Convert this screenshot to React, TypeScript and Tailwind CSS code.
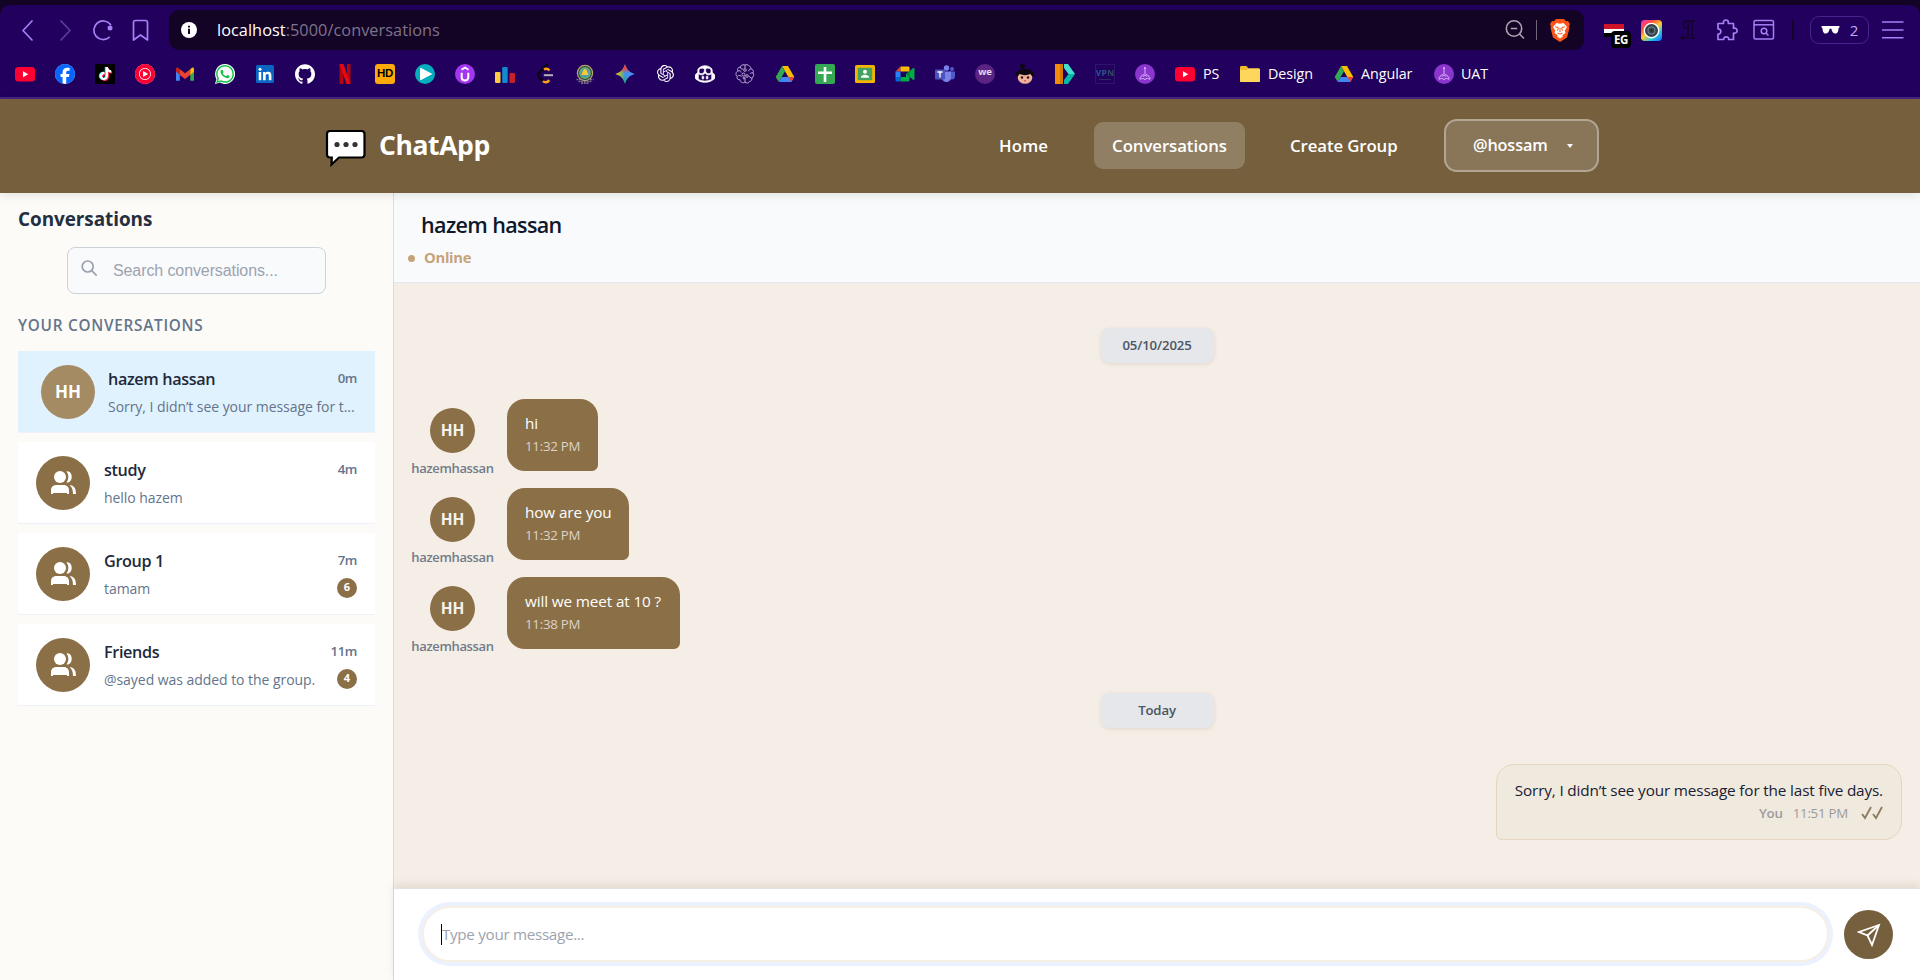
import React from "react";
import { SiFacebook, SiTiktok, SiYoutubemusic, SiWhatsapp, SiGithub, SiOpenai, SiGithubcopilot } from "react-icons/si";

const purple = "#a87ff5";

function Fav({ children }: { children: React.ReactNode }) {
  return <div className="flex h-5 w-5 shrink-0 items-center justify-center">{children}</div>;
}

function S({ children }: { children?: React.ReactNode }) {
  return (
    <svg viewBox="0 0 20 20" className="h-5 w-5" fill="none">
      {children}
    </svg>
  );
}

const Youtube = () => (
  <S>
    <rect x="0" y="3" width="20" height="14.5" rx="3.5" fill="#ff0033" />
    <path d="M8 7.2v6l5.2-3z" fill="#fff" />
  </S>
);
const Drive = () => (
  <S>
    <path d="M7 2h6l6.300 11H13.300z" fill="#fbbc04" />
    <path d="M7 2l3 5.300-6.200 10.700L.7 13z" fill="#34a853" />
    <path d="M6.700 13h12.600l-3 5H3.800z" fill="#4285f4" />
    <path d="M13.300 13h6l-3 5z" fill="#ea4335" />
  </S>
);
const Uat = () => (
  <S>
    <circle cx="10" cy="10" r="10" fill="#8b35cf" />
    <path d="M10 4v6.500M9 10.500c-2.500.8-3.800 2.300-4.200 4.500M11 10.500c2.500.8 3.800 2.300 4.200 4.500M5 15.500c1.500-1.300 3.500-1.300 5 0 1.500-1.300 3.500-1.300 5 0M8 12.800l2-2 2 2" stroke="#d9b8f5" strokeWidth="1" />
    <circle cx="10" cy="4" r="1" fill="#d9b8f5" />
  </S>
);

function Bookmarks() {
  return (
    <div className="flex h-[47px] items-center gap-5 pl-[15px] text-[14.300px] tracking-[-0.050px] text-white">
      <Fav><Youtube /></Fav>
      <Fav><div className="h-5 w-5 rounded-full bg-white"><SiFacebook size={20} color="#0866ff" /></div></Fav>
      <Fav>
        <div className="relative flex h-5 w-5 items-center justify-center bg-black">
          <SiTiktok size={13} color="#25f4ee" className="absolute left-[3px] top-[3px]" />
          <SiTiktok size={13} color="#fe2c55" className="absolute left-[4.500px] top-[4.500px]" />
          <SiTiktok size={13} color="#fff" className="absolute left-[3.700px] top-[3.700px]" />
        </div>
      </Fav>
      <Fav><div className="h-5 w-5 rounded-full bg-white"><SiYoutubemusic size={20} color="#ff0033" /></div></Fav>
      <Fav>
        <S>
          <path d="M1 4.500v12.200h3.800V8z" fill="#4285f4" />
          <path d="M19 4.500v12.200h-3.800V8z" fill="#34a853" />
          <path d="M15.200 5.200 17 3.700c1-.7 2 0 2 1.300v2.800L15.200 11z" fill="#fbbc04" />
          <path d="M4.800 5.200 3 3.700C2 3 1 3.700 1 5v2.800L4.800 11z" fill="#c5221f" />
          <path d="M4.800 5.200 10 9.200l5.200-4V11L10 15 4.800 11z" fill="#ea4335" />
        </S>
      </Fav>
      <Fav>
        <div className="relative h-5 w-5">
          <S><path d="M10 0a10 10 0 1 1-5 18.600L0 20l1.400-5A10 10 0 0 1 10 0z" fill="#fff" /></S>
          <SiWhatsapp size={18} color="#13c24b" className="absolute left-px top-px" />
        </div>
      </Fav>
      <Fav>
        <S>
          <rect x="1" y="1" width="18" height="18" rx="1.500" fill="#0a66c2" />
          <path d="M3.700 8h2.600v8.200H3.700zM8 8h2.500v1.200c.5-.9 1.400-1.400 2.700-1.400 2.400 0 3.200 1.500 3.200 3.900v4.500h-2.600v-4c0-1.300-.3-2.100-1.400-2.100-1.200 0-1.700.8-1.700 2.100v4H8z" fill="#fff" />
          <circle cx="5" cy="5.200" r="1.500" fill="#fff" />
        </S>
      </Fav>
      <Fav><SiGithub size={20} color="#fff" /></Fav>
      <Fav>
        <S>
          <path d="M4.500 0H8v20l-3.500.3zM12 0h3.500v20H12z" fill="#b1060f" />
          <path d="M4.500 0H8.500L15.500 20h-4z" fill="#e50914" />
        </S>
      </Fav>
      <Fav><div className="flex h-5 w-5 items-center justify-center rounded-[3px] bg-[#ffa90a] font-['Liberation_Sans',sans-serif] text-[11.500px] font-bold tracking-[-0.300px] text-black">HD</div></Fav>
      <Fav><S><circle cx="10" cy="10" r="10" fill="#05aebd" /><path d="M5.500 4.200v11.600L16.500 10z" fill="#fff" stroke="#fff" strokeLinejoin="round" /></S></Fav>
      <Fav>
        <S>
          <circle cx="10" cy="10" r="10" fill="#a435f0" />
          <path d="M6.700 8.800v4.400c0 4.400 6.600 4.400 6.600 0V8.800" stroke="#fff" strokeWidth="2" />
          <path d="M6.500 5.800 10 3.600l3.500 2.200" stroke="#fff" strokeWidth="1.800" />
        </S>
      </Fav>
      <Fav>
        <S>
          <rect x="0" y="8" width="5.500" height="11" rx="1" fill="#ffcb45" />
          <rect x="7.200" y="3" width="5.500" height="16" rx="1" fill="#1389d0" />
          <rect x="14.500" y="9" width="5.500" height="10" rx="1" fill="#c4212d" />
        </S>
      </Fav>
      <Fav>
        <S>
          <path d="M12.500.3 4.300 8.600c-1.400 1.500-1.400 3.200 0 4.700l4 4" stroke="#0b0714" strokeWidth="2.600" />
          <path d="M9 5.600c2-1.400 3.700-1 5.500.9M8 17c1.700 1.900 4 1.900 6.300-.9" stroke="#ffa116" strokeWidth="2.500" />
          <path d="M8.800 11.200H18" stroke="#b3b3b3" strokeWidth="2" />
        </S>
      </Fav>
      <Fav>
        <S>
          <path d="M5 3.500C6 0 14 0 15 3.500L17 6H3z" fill="#9a7272" />
          <path d="M1.500 15.500h17M3.500 17.500h13M6 19.300h8" stroke="#77738b" strokeWidth="1.500" strokeDasharray="2 .7" />
          <circle cx="10" cy="9" r="7.600" fill="#253f4e" stroke="#b6a36c" strokeWidth="1.300" />
          <circle cx="10" cy="9" r="5.200" fill="#4a9bb0" stroke="#6fae62" strokeWidth="1.400" />
          <path d="M10 4.800c2.300 1.200 2.300 3.400 3.500 6.200h-7c1.200-2.800 1.200-5 3.500-6.200z" fill="#ffc936" />
        </S>
      </Fav>
      <Fav>
        <svg viewBox="0 0 20 20" className="h-5 w-5">
          <defs>
            <linearGradient id="gem" x1="0" y1="0" x2="1" y2="0">
              <stop offset="0" stopColor="#f5c52a" /><stop offset=".3" stopColor="#8bb84a" /><stop offset=".5" stopColor="#3d8ff0" /><stop offset="1" stopColor="#4a92ff" />
            </linearGradient>
            <linearGradient id="gem2" x1="0" y1="0" x2="0" y2="1">
              <stop offset="0" stopColor="#f2453b" /><stop offset=".2" stopColor="#f2453b" /><stop offset=".45" stopColor="#f2453b" stopOpacity="0" /><stop offset=".6" stopColor="#1bb15c" stopOpacity="0" /><stop offset="1" stopColor="#1bb15c" />
            </linearGradient>
          </defs>
          <path d="M10 .3C11.500 5.500 14.500 8.500 19.700 10 14.500 11.500 11.500 14.500 10 19.700 8.500 14.500 5.500 11.500.3 10 5.500 8.500 8.500 5.500 10 .3z" fill="url(#gem)" />
          <path d="M10 .3C11.500 5.500 14.500 8.500 19.700 10 14.500 11.500 11.500 14.500 10 19.700 8.500 14.500 5.500 11.500.3 10 5.500 8.500 8.500 5.500 10 .3z" fill="url(#gem2)" />
        </svg>
      </Fav>
      <Fav><SiOpenai size={17} color="#fff" /></Fav>
      <Fav><SiGithubcopilot size={20} color="#fff" stroke="#fff" strokeWidth={0.8} /></Fav>
      <Fav>
        <S>
          <g stroke="#b9a8cf" strokeWidth="1" strokeLinejoin="round">
            <path d="M10 1C7 0 5.500 2 5.500 3 3 3 2 5 3 7 .5 8 .5 11 2 12.300 1.500 15 3.500 16 5 15.700c0 2.500 3 4 5 2.300 1 1.500 4 1.500 4.500-.7 2 0 2.800-1.800 2.300-3.300 2-1 2.500-3.500 1.200-5 1-2-.3-4-2-4.300C15.500 2 12.500 0 10 1z" />
            <path d="M3 7c1.500-.8 3 0 3 1.500M2.500 12c1.500-1 3.500-.7 4 .8M5.500 3c0 1.700 1 2.500 2.700 2M10 1v3.500M16 5c-1.500 0-2.300.8-2.300 2.300M18 9c-1.500-.5-2.500 0-3 1M16.800 14c-1.300 0-2.500-.6-2.500-2M10 18v-3.500" />
            <circle cx="10" cy="6" r="1.300" /><circle cx="8.500" cy="10.500" r="1.500" /><circle cx="12" cy="12" r="1.300" /><circle cx="9" cy="14" r="1" />
          </g>
        </S>
      </Fav>
      <Fav><Drive /></Fav>
      <Fav><S><rect width="20" height="20" rx="2" fill="#34a853" /><path d="M8.700 3h2.600v4.600H17v2.400h-5.700V18H8.700v-8H3V7.600h5.700z" fill="#fff" /></S></Fav>
      <Fav>
        <S>
          <rect y="1" width="20" height="18" rx="1.500" fill="#f4b400" />
          <rect x="2.800" y="3.800" width="14.400" height="12.400" fill="#42a35f" />
          <circle cx="10" cy="7.700" r="2" fill="#fff" /><path d="M5.800 13.800c0-4 8.400-4 8.400 0z" fill="#fff" />
        </S>
      </Fav>
      <Fav>
        <S>
          <path d="M.5 7.500 5.500 2.500v5z" fill="#ea4335" />
          <path d="M5.500 2.500H13c1 0 1.500.5 1.500 1.500v3.500h-9z" fill="#fbbc04" />
          <path d="M.5 7.500h5v5.500h-5z" fill="#2684fc" />
          <path d="M.5 13h5v4.500H2C1 17.500.5 17 .5 16z" fill="#0066da" />
          <path d="M5.500 13H11v-3l3.500-3v9c0 1-.5 1.500-1.500 1.500H5.500z" fill="#00ac47" />
          <path d="M14.500 7.500 11 10l3.500 2.500z" fill="#00832d" />
          <path d="m14.500 7.200 3.500-2.900c.7-.5 1.500 0 1.500.7v10c0 .8-.8 1.200-1.500.7l-3.500-2.900z" fill="#00ac47" />
        </S>
      </Fav>
      <Fav>
        <S>
          <circle cx="11.500" cy="4" r="2.700" fill="#7b83eb" /><circle cx="17" cy="5" r="2" fill="#5059c9" />
          <path d="M14.500 7.500H20v5c0 2.500-3 4-4.500 2.500z" fill="#5059c9" />
          <path d="M7 7.500h9v6c0 5-7.500 6.500-9 1z" fill="#7b83eb" />
          <rect x="0" y="5.500" width="10" height="10" rx="1" fill="#4b53bc" />
          <path d="M2.500 8h5M5 8v5.500" stroke="#fff" strokeWidth="1.300" />
        </S>
      </Fav>
      <Fav><div className="flex h-5 w-5 items-center justify-center rounded-full bg-[#5c2482] pb-0.5 text-[9.500px] font-bold tracking-[-0.200px] text-[#e5d8ee]">we</div></Fav>
      <Fav>
        <S>
          <circle cx="7.500" cy="2.500" r="2.400" fill="#0d0710" />
          <ellipse cx="10" cy="13.500" rx="7.300" ry="6.300" fill="#eeb299" />
          <path d="M.3 12C.5 2.500 19.500 2.500 19.700 12c-1.500.7-3 .5-4.200-2-3.500 1.500-7.500 1.500-11 0-1.200 2.500-2.700 2.700-4.200 2z" fill="#0d0710" />
          <circle cx="7" cy="13.500" r="1.200" fill="#291019" /><circle cx="13" cy="13.500" r="1.200" fill="#291019" />
          <path d="M9 16.800h2" stroke="#c44" />
        </S>
      </Fav>
      <Fav>
        <S>
          <path d="M0 0h8v20H0z" fill="#f48c0b" /><path d="M5 0h3v20H5z" fill="#d97706" />
          <path d="M9 0h4l7 10h-6.500L9 4z" fill="#42dfd0" /><path d="M13.500 10H20l-7 10H9v-4z" fill="#08b7a8" />
        </S>
      </Fav>
      <Fav>
        <div className="flex h-5 w-5 flex-col items-center border border-[#32136b] pt-[3px] text-[8.500px] leading-[9px] font-bold tracking-[0.300px]">
          <span className="text-[#27568c]">VP<span className="text-[#2c4d5c]">N</span></span>
          <span className="mt-[2px] h-px w-3 bg-[#2c2c5c]" />
        </div>
      </Fav>
      <Fav><Uat /></Fav>
      <div className="flex w-[45px] items-center gap-2"><Fav><Youtube /></Fav><span>PS</span></div>
      <div className="flex w-[74px] items-center gap-2">
        <Fav><S><path d="M0 3.500C0 2.500.5 2 1.500 2h5l2 2.500h10c1 0 1.500.5 1.500 1.500v10.500c0 1-.5 1.500-1.500 1.500h-17C.5 18 0 17.500 0 16.500z" fill="#f0b92e" /><path d="M0 6h7l1.500-1.500H18.500c1 0 1.500.5 1.500 1.500v10.500c0 1-.5 1.500-1.500 1.500h-17C.5 18 0 17.500 0 16.500z" fill="#ffd65c" /></S></Fav>
        <span>Design</span>
      </div>
      <div className="flex w-20 items-center gap-[7px]"><Fav><Drive /></Fav><span>Angular</span></div>
      <div className="flex items-center gap-[7px]"><Fav><Uat /></Fav><span>UAT</span></div>
    </div>
  );
}

function Toolbar() {
  return (
    <div className="flex h-[45px] items-center pt-[5px]">
      <svg width="169" height="40" viewBox="0 0 169 40" fill="none" stroke={purple} strokeWidth="1.700" strokeLinecap="round" strokeLinejoin="round">
        <path d="m32 11-9 9.500 9 9.500" />
        <path d="m61 11 9 9.500-9 9.500" stroke="#603a9f" />
        <path d="M110.500 14.500a9.300 9.300 0 1 0-1.300 12.800" /><circle cx="110" cy="18" r="2.500" fill={purple} stroke="none" />
        <path d="M133.500 12.500c0-1.500.5-2 2-2h10c1.500 0 2 .5 2 2v17.500l-7-5-7 5z" />
      </svg>
      <div className="flex h-10 w-[1415px] items-center rounded-[10px] bg-[#130325] pl-3 pr-[13px]">
        <svg width="16" height="16" viewBox="0 0 16 16"><circle cx="8" cy="8" r="8" fill="#fff" /><path d="M7 6.800h2V12H7zM7 3.800h2v1.800H7z" fill="#130325" /></svg>
        <span className="ml-5 flex-1 text-[16.300px] tracking-[0.050px] text-[#7d748b]"><span className="text-white">localhost</span>:5000/conversations</span>
        <svg width="22" height="22" viewBox="0 0 22 22" fill="none" stroke="#aaa4b3" strokeWidth="1.600"><circle cx="10" cy="9.500" r="7.700" /><path d="m15.500 15 4.500 4.500M6.800 9.500h6.400" /></svg>
        <span className="ml-[10px] h-5 w-px bg-[#6d6675]" />
        <svg width="20" height="23" viewBox="0 0 20 23" className="ml-[13px] mr-px">
          <path d="M6 0h8l2 2.200 2-.2 2 3-1 2.500.5 1.500-2.500 9.500L10 23l-7-4.500L.5 9 1 7.500 0 5l2-3 2 .2z" fill="#fb5419" />
          <path d="M10 4.800 13.500 4 17 8l-2.200 3.500.7 2.500-3 2 .3 1.500L10 19.500l-2.800-2 .3-1.500-3-2 .7-2.500L3 8l3.500-4z" fill="#fff" />
          <path d="m5 7.800 3.500.8-1 3M15 7.800l-3.500.8 1 3M10 9v4M7.500 14l2.500 1 2.500-1" stroke="#fb5419" strokeWidth="1" fill="none" />
        </svg>
      </div>
      <div className="relative ml-5 h-10 w-[26px]">
        <div className="mt-[14px] h-[5px] w-5 bg-[#d01427]" /><div className="h-[4px] w-5 bg-white" /><div className="h-[4px] w-5 bg-black" />
        <span className="absolute left-[7px] top-[21px] flex h-[17px] w-[20px] items-center justify-center rounded-[4px] bg-black text-[11.500px] font-bold tracking-[-0.300px] text-white">EG</span>
      </div>
      <svg width="21" height="21" viewBox="0 0 20 20" className="ml-[11px]">
        <defs><linearGradient id="cam" x1="0" y1="0" x2=".8" y2="1"><stop stopColor="#f32cc4" /><stop offset=".3" stopColor="#ff5039" /><stop offset=".55" stopColor="#ffcb32" /><stop offset=".8" stopColor="#25c9db" /><stop offset="1" stopColor="#1985ff" /></linearGradient></defs>
        <rect width="20" height="20" rx="3.500" fill="url(#cam)" /><circle cx="10" cy="10" r="7.500" fill="#fff" /><circle cx="10" cy="10" r="6.200" fill="#35454d" /><circle cx="10" cy="10" r="3.300" fill="none" stroke="#73858c" /><circle cx="10" cy="10" r="1" fill="#1a2529" />
      </svg>
      <svg width="18" height="20" viewBox="0 0 18 20" className="ml-[18px]" stroke="#130325" strokeWidth="1.300" fill="none"><path d="M7 1h8M8 1v14M12 1v14M6.500 15h3M10.500 15h3M8 8H6C2 8 2 1 7 1M1 17.800h14M4 15.800l-3 2 3 2" /></svg>
      <svg width="22" height="22" viewBox="0 0 22 22" className="ml-[18px]" stroke={purple} strokeWidth="1.700" fill="none" strokeLinejoin="round"><path d="M2 4.500h5.500c-1.200-4.700 6-4.700 4.800 0H17.500v4.800c4.800-1.200 4.800 6 0 4.800v6.400h-4.800c.2-3.600-5.200-3.600-5 0H2v-5.300c3.800.2 3.800-5.500 0-5.300z" /></svg>
      <svg width="22" height="22" viewBox="0 0 22 22" className="ml-[15px]" stroke={purple} strokeWidth="1.500" fill="none"><rect x="1" y="1.500" width="19.500" height="18.500" rx="1.500" /><path d="M1 5.800h19.500" /><circle cx="11" cy="12" r="2.800" /><path d="m13 14 2.500 2.500" /></svg>
      <span className="ml-[17px] h-5 w-[2px] bg-[#130325]" />
      <div className="ml-4 flex h-7 w-[59px] items-center justify-center gap-[10px] rounded-[9px] border border-[#45258b] text-[15px] text-[#c3a9fa]">
        <svg width="19" height="8" viewBox="0 0 20 9"><path d="M0 0h20v2l-1 .5c0 3-1 6-3.500 6S11.500 6 11 3H9c-.5 3-2 5.500-4.500 5.500S1 5.500 1 2.500L0 2z" fill="#fff" /></svg>
        2
      </div>
      <svg width="22" height="20" viewBox="0 0 22 20" className="ml-[13px]" stroke={purple} strokeWidth="1.600"><path d="M0 2h21.500M0 10h21.500M0 17.800h21.500" /></svg>
    </div>
  );
}

function Header() {
  return (
    <header className="relative z-10 flex h-[94px] items-center bg-[#755f3d] pb-px pl-[325px] font-semibold text-white shadow-[0_2px_10px_rgba(0,0,0,0.100)]">
      <svg width="42" height="38" viewBox="0 0 42 38" className="mt-[5px]">
        <path d="M5 2h31.500c2 0 3 1 3 3v20.500c0 2-1 3-3 3H14L6.500 35.500l.3-7H5c-2 0-3-1-3-3V5c0-2 1-3 3-3z" fill="#fff" stroke="#000" strokeWidth="2.200" />
        <circle cx="12" cy="15.500" r="2.600" fill="#333" /><circle cx="21" cy="15.500" r="2.600" fill="#333" /><circle cx="30" cy="15.500" r="2.600" fill="#333" />
      </svg>
      <span className="ml-[12px] w-[620px] text-[26.500px] font-bold tracking-[-0.400px]">ChatApp</span>
      <span className="w-[95px] text-[16.800px] tracking-[0.150px]">Home</span>
      <span className="flex h-[47px] w-[151px] items-center justify-center rounded-[9px] bg-white/20 text-[16.800px] tracking-[-0.070px]">Conversations</span>
      <span className="ml-[45px] w-[154px] text-[16.800px] tracking-[-0.100px]">Create Group</span>
      <span className="flex h-[53px] w-[155px] items-center rounded-[13px] border-2 border-white/35 bg-white/15 pl-[27px] text-[16.300px] tracking-[-0.170px]">
        @hossam
        <svg width="6" height="4" className="ml-[19px]"><path d="M0 0h6L3 4z" fill="#fff" /></svg>
      </span>
    </header>
  );
}

function GroupIcon() {
  return (
    <svg width="28" height="26" viewBox="0 0 28 26" fill="#fff">
      <circle cx="11" cy="7" r="6" />
      <path d="M17.500 1.300c7-1 7 12.200 0 11.200 2.500-3.500 2.500-7.700 0-11.200z" />
      <path d="M2 24v-3.500C2 16.500 4.500 15 8 15h6c3.500 0 6 1.500 6 5.500V24h-2v-1H4v1z" />
      <path d="M20.500 15c4.500.4 6.500 3 6.500 9h-3c0-4-1-7-3.500-9z" />
    </svg>
  );
}

const chats = [
  { name: "hazem hassan", time: "0m", text: "Sorry, I didn’t see your message for t...", active: true },
  { name: "study", time: "4m", text: "hello hazem" },
  { name: "Group 1", time: "7m", text: "tamam", unread: 6 },
  { name: "Friends", time: "11m", text: "@sayed was added to the group.", unread: 4 },
];

function Sidebar() {
  return (
    <aside className="flex w-[394px] flex-col border-r border-[#dcdde0] bg-[#fdfbf8] px-[18px]">
      <h2 className="mt-[11px] text-[18.900px] leading-[30px] font-bold tracking-[-0.050px] text-[#242f42]">Conversations</h2>
      <div className="mx-auto mt-[13px] flex h-[47px] w-[259px] items-center rounded-[8px] border border-[#cdd2da] bg-[#f9fafc] pl-[13px]">
        <svg width="17" height="17" viewBox="0 0 17 17" fill="none" stroke="#9aa1ad" strokeWidth="1.700" className="-mt-1"><circle cx="6.700" cy="6.500" r="5.500" /><path d="m10.700 10.700 5 5" /></svg>
        <span className="ml-[15px] font-['Liberation_Sans',sans-serif] text-[16px] tracking-[-0.100px] text-[#9ca3af]">Search conversations...</span>
      </div>
      <h3 className="mt-[20px] text-[15.300px] leading-[22px] font-semibold tracking-[0.750px] text-[#64748b]">YOUR CONVERSATIONS</h3>
      <div className="mt-[15px] flex flex-col gap-[9px]">
        {chats.map((c) => (
          <div key={c.name} className={c.active ? "flex h-[82px] items-center gap-[13px] border-b border-[#f0f2fa] bg-[#e0f2fe] pl-[23px] pr-[18px]" : "flex h-[82px] items-center gap-[14px] border-b border-[#eff1fa] bg-white pl-[18px] pr-[18px]"}>
            <div className={c.active ? "flex h-[54px] w-[54px] shrink-0 items-center justify-center rounded-full bg-[#a58b64] text-[17px] font-bold text-white" : "flex h-[54px] w-[54px] shrink-0 items-center justify-center rounded-full bg-[#8b6f47]"}>
              {c.active ? "HH" : <GroupIcon />}
            </div>
            <div className="flex min-w-0 flex-1 flex-col pt-[3px]">
              <div className="flex h-[27px] items-center justify-between">
                <span className="text-[16.200px] font-semibold tracking-[-0.350px] text-[#1e293b]">{c.name}</span>
                <span className="text-[13.200px] font-semibold tracking-[-0.400px] text-[#64748b]">{c.time}</span>
              </div>
              <div className="flex h-[28px] items-center justify-between">
                <span className="text-[14px] whitespace-nowrap tracking-[-0.050px] text-[#64748b]">{c.text}</span>
                {c.unread && <span className="mb-[2px] flex h-5 w-5 shrink-0 items-center justify-center rounded-full bg-[#8b6f47] text-[11px] font-bold text-white">{c.unread}</span>}
              </div>
            </div>
          </div>
        ))}
      </div>
    </aside>
  );
}

const messages = [
  { text: "hi", time: "11:32 PM", w: "w-[91px]" },
  { text: "how are you", time: "11:32 PM", w: "w-[122px]" },
  { text: "will we meet at 10 ?", time: "11:38 PM", w: "w-[173px]" },
];

function DatePill({ children }: { children: React.ReactNode }) {
  return <div className="mx-auto flex h-[35px] w-[113px] items-center justify-center rounded-[9px] bg-[#e5e7eb] text-[13.200px] font-semibold tracking-[-0.150px] text-[#4b5563] shadow-[0_1px_4px_rgba(117,95,61,0.150)]">{children}</div>;
}

function Chat() {
  return (
    <main className="flex flex-1 flex-col">
      <div className="h-[90px] border-b border-[#e2e8f0] bg-[#f9fafc]">
        <div className="ml-[27px] mt-[16px] text-[21.500px] leading-8 font-semibold tracking-[-0.620px] text-[#0f172a]">hazem hassan</div>
        <div className="ml-[14px] mt-[4px] flex items-center gap-[9px] text-[14.800px] leading-6 font-bold tracking-[-0.300px] text-[#c5a47a]"><span className="mt-[2px] h-[7px] w-[7px] rounded-full bg-[#c5a47a]" />Online</div>
      </div>
      <div className="flex flex-1 flex-col bg-[#f5eee7] pt-[45px]">
        <DatePill>05/10/2025</DatePill>
        <div className="mt-[36px] flex flex-col gap-[17px]">
          {messages.map((m) => (
            <div key={m.text} className="flex h-[72px] pl-[18px]">
              <div className="flex w-[81px] flex-col items-center pt-[9px]">
                <div className="flex h-[45px] w-[45px] shrink-0 items-center justify-center rounded-full bg-[#8b6f47] text-[15.500px] font-bold text-[#f7f2ec]">HH</div>
                <span className="mt-[6px] text-[13px] leading-[18px] font-semibold tracking-[-0.350px] text-[#737b89]">hazemhassan</span>
              </div>
              <div className={`${m.w} ml-[14px] flex h-[72px] flex-col rounded-[18px] rounded-br-[6px] bg-[#8b6f47] pl-[18px] pt-[13px] whitespace-nowrap`}>
                <span className="text-[15.300px] leading-[23px] tracking-[-0.130px] text-white">{m.text}</span>
                <span className="text-[13.300px] leading-[22px] tracking-[-0.250px] text-[#ddd3c6]">{m.time}</span>
              </div>
            </div>
          ))}
        </div>
        <div className="mt-[44px]"><DatePill>Today</DatePill></div>
        <div className="mr-[18px] mt-[36px] flex h-[76px] w-[406px] flex-col items-end self-end rounded-[18px] rounded-bl-[6px] border border-[#e5d7bb] bg-[#f0e9dd] pr-[18px] pt-[14px]">
          <span className="text-[15.300px] leading-[23px] tracking-[-0.150px] whitespace-nowrap text-[#1a2035]">Sorry, I didn’t see your message for the last five days.</span>
          <span className="flex items-center text-[13.300px] leading-[22px] tracking-[-0.250px] text-[#9b9b9e]">
            <b className="mr-[10px] font-semibold">You</b>11:51 PM
            <svg width="22" height="14" viewBox="0 0 22 14" className="ml-[13px]" fill="none" stroke="#8d7d62" strokeWidth="1.900"><path d="m1 8 3 4L10 1M12 8l3 4L21 1" /></svg>
          </span>
        </div>
      </div>
      <div className="flex h-[92px] items-center border-t border-[#dfe3e8] bg-white pl-7 shadow-[0_-3px_8px_rgba(117,95,61,0.150)]">
        <div className="-mt-px flex h-[56px] w-[1407px] items-center rounded-full border-2 border-[#f7eee4] bg-white pl-[17px] shadow-[0_0_0_4px_#ebf1fe]">
          <span className="h-[21px] w-px bg-black" />
          <span className="text-[15.200px] tracking-[-0.300px] text-[#9ca3af]">Type your message...</span>
        </div>
        <div className="ml-[15px] flex h-[49px] w-[49px] items-center justify-center rounded-full bg-[#755f3d]">
          <svg width="24" height="24" viewBox="0 0 24 24" fill="none" stroke="#fff" strokeWidth="1.800"><path d="M22 2 2 9l8.500 3.500L15 22z" /><path d="M22 2 10.500 12.500" /></svg>
        </div>
      </div>
    </main>
  );
}

export default function App() {
  return (
    <div className="flex h-[980px] w-[1920px] flex-col overflow-hidden bg-[#130325] font-['Open_Sans','Noto_Sans',sans-serif]">
      <div className="mt-[5px] flex h-[94px] flex-col rounded-t-[10px] border-b-2 border-[#472485] bg-[#22005d]">
        <Toolbar />
        <Bookmarks />
      </div>
      <Header />
      <div className="flex flex-1">
        <Sidebar />
        <Chat />
      </div>
    </div>
  );
}
